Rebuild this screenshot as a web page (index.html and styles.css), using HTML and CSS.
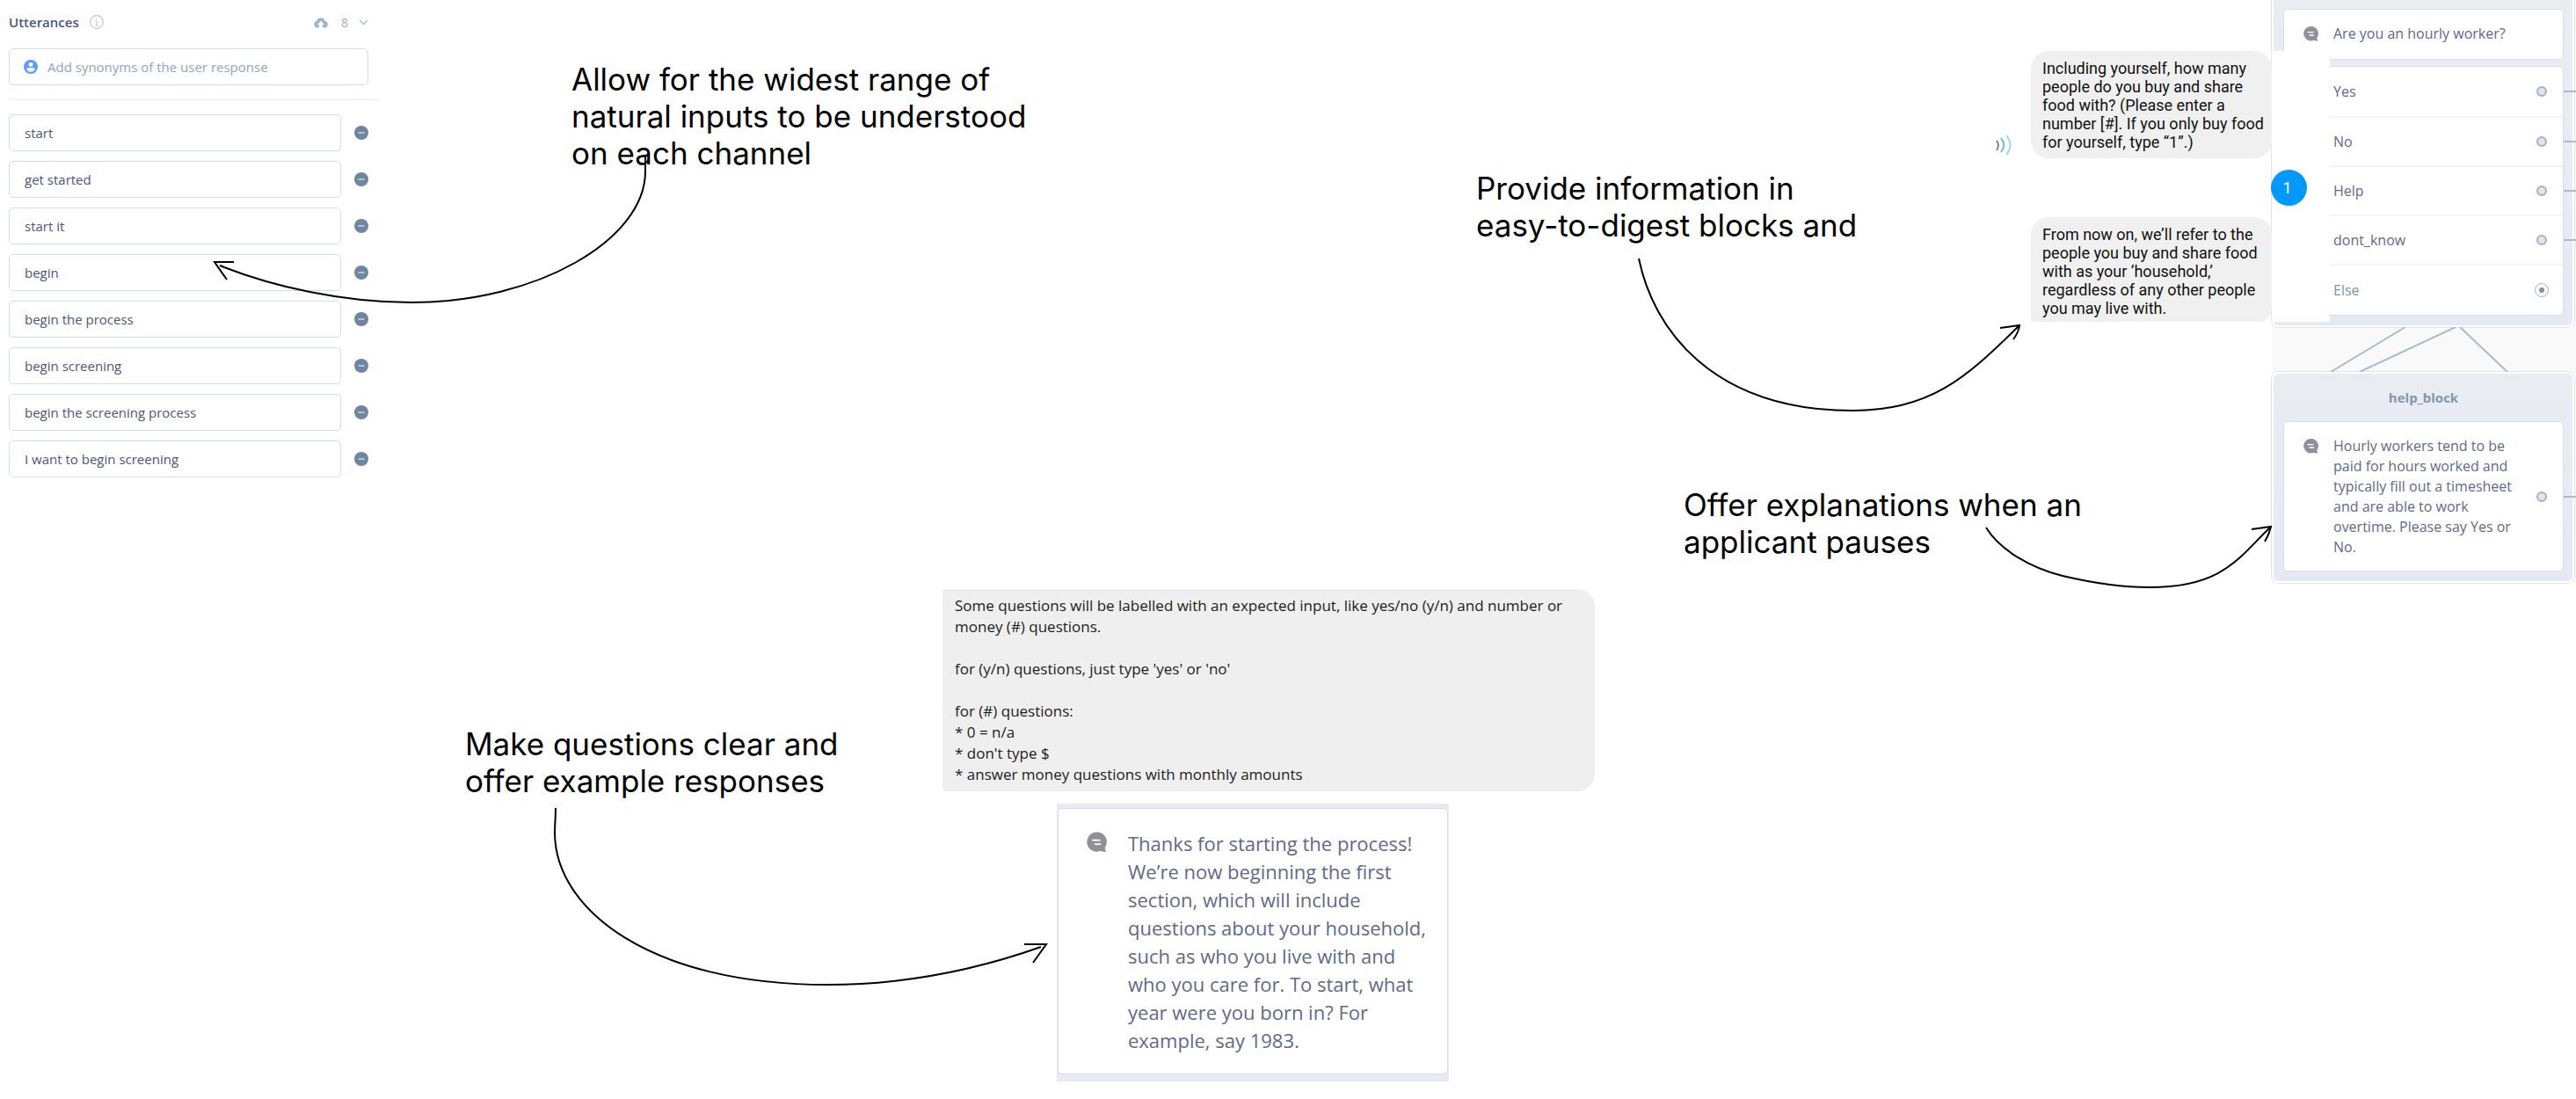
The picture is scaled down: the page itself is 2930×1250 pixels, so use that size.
FILE: index.html
```html
<!DOCTYPE html>
<html lang="en">
<head>
<meta charset="utf-8">
<title>Conversation design notes</title>
<link rel="stylesheet" href="styles.css">
</head>
<body>
<svg class="defs" width="0" height="0" aria-hidden="true">
  <symbol id="minus" viewBox="0 0 16 16"><circle cx="8" cy="8" r="8" fill="#70869e"/><path d="M4.500 8h7" stroke="#dfe6ee" stroke-width="1.300"/></symbol>
  <symbol id="speech" viewBox="0 0 17 17"><path d="M8.300 0a8.200 8.200 0 1 0 3.200 15.800l4.700 1-.9-3.800A8.200 8.200 0 0 0 8.300 0z" fill="#8f9098"/><path d="M4.500 6.700h7M6.500 10h5.500" stroke="#fff" stroke-width="1.300"/></symbol>
</svg>
<main class="board">

  <section class="item utterances" aria-label="Utterances">
    <header class="utterances-head">
      <h2>Utterances</h2>
      <svg class="info" viewBox="0 0 16 16"><circle cx="8" cy="8" r="7.300" fill="none" stroke="#b9cadb" stroke-width="1.200"/><path d="M8 7v5M6.700 7H8M6.500 12h3M8 3.700v1.500" stroke="#b9cadb" stroke-width="1.200" fill="none"/></svg>
      <button class="icon-button push" aria-label="Upload"><svg width="16" height="13" viewBox="0 0 16 13"><path d="M5.800 12.500H4A4 4 0 0 1 3.200 4.700 5 5 0 0 1 12.800 5a3.800 3.800 0 0 1-.4 7.500H10V9h2L8 4.800 4 9h1.800z" fill="#a3b4c6"/></svg></button>
      <span class="count">8</span>
      <button class="icon-button" aria-label="Collapse"><svg width="11" height="7" viewBox="0 0 11 7"><path d="M1 1l4.500 4.500L10 1" fill="none" stroke="#b3c5d8" stroke-width="1.600"/></svg></button>
    </header>
    <label class="field add">
      <svg width="16" height="16" viewBox="0 0 16 16"><circle cx="8" cy="8" r="8" fill="#5b9cf6"/><circle cx="8" cy="5.200" r="2.500" fill="#fff"/><path d="M3.200 10c.5 5 9.100 5 9.600 0-1.500-1.300-8.100-1.300-9.600 0z" fill="#fff"/></svg>
      <input type="text" aria-label="Add synonyms" placeholder="Add synonyms of the user response">
    </label>
    <hr>
    <ul class="phrases">
      <li><input class="field" aria-label="Utterance 1" value="start"><button class="icon-button" aria-label="Remove"><svg width="16" height="16"><use href="#minus"/></svg></button></li>
      <li><input class="field" aria-label="Utterance 2" value="get started"><button class="icon-button" aria-label="Remove"><svg width="16" height="16"><use href="#minus"/></svg></button></li>
      <li><input class="field" aria-label="Utterance 3" value="start it"><button class="icon-button" aria-label="Remove"><svg width="16" height="16"><use href="#minus"/></svg></button></li>
      <li><input class="field" aria-label="Utterance 4" value="begin"><button class="icon-button" aria-label="Remove"><svg width="16" height="16"><use href="#minus"/></svg></button></li>
      <li><input class="field" aria-label="Utterance 5" value="begin the process"><button class="icon-button" aria-label="Remove"><svg width="16" height="16"><use href="#minus"/></svg></button></li>
      <li><input class="field" aria-label="Utterance 6" value="begin screening"><button class="icon-button" aria-label="Remove"><svg width="16" height="16"><use href="#minus"/></svg></button></li>
      <li><input class="field" aria-label="Utterance 7" value="begin the screening process"><button class="icon-button" aria-label="Remove"><svg width="16" height="16"><use href="#minus"/></svg></button></li>
      <li><input class="field" aria-label="Utterance 8" value="I want to begin screening"><button class="icon-button" aria-label="Remove"><svg width="16" height="16"><use href="#minus"/></svg></button></li>
    </ul>
  </section>

  <section class="item flow" aria-label="Flow">
    <div class="block block-top">
      <div class="card message"><svg width="17" height="17"><use href="#speech"/></svg><p>Are you an hourly worker?</p></div>
      <ul class="card choices">
        <li class="wired">Yes<span class="port"></span></li>
        <li class="wired">No<span class="port"></span></li>
        <li class="wired">Help<span class="port"></span></li>
        <li class="wired">dont_know<span class="port"></span></li>
        <li class="else">Else<span class="port target"></span></li>
      </ul>
    </div>
    <svg class="links" width="346" height="51" viewBox="0 0 346 51"><path d="M152 0L67 51M209 0L100 51M214 0l54 51" stroke="#a9bccd" stroke-width="2" fill="none"/></svg>
    <div class="block">
      <h3>help_block</h3>
      <div class="card message wired"><svg width="17" height="17"><use href="#speech"/></svg><p>Hourly workers tend to be<br>paid for hours worked and<br>typically fill out a timesheet<br>and are able to work<br>overtime. Please say Yes or<br>No.</p><span class="port"></span></div>
    </div>
  </section>

  <section class="item chat" aria-label="Chat">
    <div class="turn">
      <svg class="waves" width="20" height="24" viewBox="0 0 20 24" fill="none"><path d="M1 7q4 5 0 11" stroke="#37788b" stroke-width="1.500"/><path d="M6 4q6.500 8 0 16" stroke="#4fb0c6" stroke-width="1.600"/><path d="M12 1q9 11 0 22" stroke="#a0d8e4" stroke-width="2"/></svg>
      <p class="bubble">Including yourself, how many<br>people do you buy and share<br>food with? (Please enter a<br>number [#]. If you only buy food<br>for yourself, type “1”.)</p>
    </div>
    <p class="reply">1</p>
    <div class="turn">
      <p class="bubble tail">From now on, we’ll refer to the<br>people you buy and share food<br>with as your ‘household,’<br>regardless of any other people<br>you may live with.</p>
    </div>
  </section>

  <section class="item hint">
    <p>Some questions will be labelled with an expected input, like yes/no (y/n) and number or<br>money (#) questions.</p>
    <p>for (y/n) questions, just type 'yes' or 'no'</p>
    <p>for (#) questions:<br>* 0 = n/a<br>* don't type $<br>* answer money questions with monthly amounts</p>
  </section>

  <section class="item opener">
    <div class="card message"><svg width="23" height="24"><use href="#speech"/></svg><p>Thanks for starting the process!<br>We’re now beginning the first<br>section, which will include<br>questions about your household,<br>such as who you live with and<br>who you care for. To start, what<br>year were you born in? For<br>example, say 1983.</p></div>
  </section>

  <p class="item note note-inputs">Allow for the widest range of<br>natural inputs to be understood<br>on each channel</p>
  <p class="item note note-blocks">Provide information in<br>easy-to-digest blocks and</p>
  <p class="item note note-explain">Offer explanations when an<br>applicant pauses</p>
  <p class="item note note-examples">Make questions clear and<br>offer example responses</p>

  <svg class="item arrows" aria-hidden="true">
    <path d="M734 178V195C734 273 610 344 468 344C390 344 310 326 250 302M266 298H244L258 318"/>
    <path d="M1864 294C1880 372 1945 467 2108 467C2195 467 2236 430 2296 371M2275 373L2297 370Q2296 378 2290 386"/>
    <path d="M2259 600C2275 626 2310 646 2346 655C2380 663 2412 668 2445 668C2530 668 2548 632 2582 600M2561 602L2583 599Q2581 608 2576 616"/>
    <path d="M632 919C632 930 631 938 631 948C632 1035 740 1120 941 1120C1025 1120 1105 1105 1184 1077M1165 1074H1190L1175 1095"/>
  </svg>
</main>
</body>
</html>
```

FILE: styles.css
```css
*, *::before, *::after { box-sizing: border-box; }
body { margin: 0; background: #fff; font-family: "Open Sans", "Noto Sans", sans-serif; }
h2, h3, p, ul { margin: 0; padding: 0; }
ul { list-style: none; }
.defs { position: absolute; }

/* Free canvas: every top-level item is pinned at its own spot */
.board { position: relative; min-height: 100vh; overflow: hidden; }
.item { position: absolute; }

.icon-button { display: flex; padding: 0; border: 0; background: none; }

/* Utterances panel */
.utterances { left: 10px; top: 15px; width: 422px; color: #4c5778; font-size: 15px; }
.utterances-head { display: flex; align-items: center; height: 20px; padding-right: 13px; }
.utterances-head h2 { font-size: 15px; font-weight: 600; line-height: 20px; }
.info { width: 16px; height: 16px; margin-left: 12px; }
.push { margin-left: auto; }
.count { margin: 0 12px 0 15px; font-size: 14px; color: #9fb0c2; }
.field { display: flex; align-items: center; height: 42px; border: 1px solid #d3dde8; border-radius: 5px; background: #fff; }
.add { gap: 11px; margin: 20px 13px 15px 0; padding: 0 16px; }
.add input { flex: 1; padding: 0; border: 0; outline: 0; font: inherit; color: inherit; }
.add input::placeholder { color: #90a5bb; opacity: 1; }
.utterances hr { height: 2px; margin: 0; border: 0; background: #f0f4f8; }
.phrases { display: flex; flex-direction: column; gap: 11px; padding: 16px 13px 0 0; }
.phrases li { display: flex; align-items: center; gap: 15px; }
.phrases .field { flex: 1; min-width: 0; padding: 0 17px; font: inherit; color: inherit; }

/* Notes and arrows */
.note { font: 35px/42px Inter, sans-serif; color: #000; white-space: nowrap; }
.note-inputs { left: 650px; top: 69px; }
.note-blocks { left: 1679px; top: 193px; }
.note-explain { left: 1915px; top: 553px; }
.note-examples { left: 529px; top: 825px; }
.arrows { inset: 0; width: 100%; height: 100%; fill: none; stroke: #000; stroke-width: 2; pointer-events: none; }

/* Shared cards */
.card { border: 1px solid #d6dce8; border-radius: 5px; background: #fff; }
.message { display: flex; align-items: flex-start; }
.message svg { flex: none; }

/* Flow blocks */
.flow { left: 2584px; top: 0; width: 346px; background: #f9f9f9; color: #5f6a88; font-size: 16px; line-height: 23px; white-space: nowrap; }
.block { margin-right: 2px; padding: 0 10px 11px 11px; border: 2px solid #fff; border-radius: 8px; background: linear-gradient(#e9edf2, #e6e9f3); box-shadow: 0 0 0 1px #dfe3ea; }
.block-top { display: flex; flex-direction: column; gap: 7px; padding-top: 10px; border-top: 0; border-radius: 0 0 8px 8px; }
.block h3 { padding: 16px 0; font-size: 15px; font-weight: 700; line-height: 22px; text-align: center; color: #8297aa; }
.flow .message { position: relative; gap: 17px; padding: 16px 16px 15px 22px; }
.flow .block-top .message { padding-bottom: 17px; }
.flow .message svg { margin-top: 3px; }
.flow .message .port { margin-left: auto; align-self: center; }
.choices li { position: relative; display: flex; align-items: center; justify-content: space-between; height: 56px; padding: 0 16px 0 56px; }
.choices li + li { border-top: 2px solid #f1f5f8; }
.choices .else { height: 58px; color: #8193a8; }
.port { display: grid; place-items: center; width: 16px; height: 16px; }
.port::before { content: ""; width: 12px; height: 12px; border: 2px solid #a3b2c1; border-radius: 50%; background: #e2e5e8; }
.target { border: 1px solid #9fb3c7; border-radius: 50%; }
.target::before { width: 6px; height: 6px; border: 0; background: #7d93aa; }
.wired::after { content: ""; position: absolute; right: -15px; top: calc(50% - 1px); width: 14px; height: 2px; background: #a9bacb; }
.links { display: block; }

/* Chat capture */
.chat { left: 2260px; top: 58px; width: 390px; height: 308px; overflow: hidden; display: flex; flex-direction: column; gap: 13px; background: linear-gradient(#fff, #fff) right / 66px 100% no-repeat; font: 18px/21px Roboto, sans-serif; color: #111; white-space: nowrap; }
.turn { display: flex; align-items: flex-end; justify-content: flex-end; gap: 20px; padding-right: 66px; }
.waves { margin-bottom: 3px; }
.bubble { flex: none; width: 274px; padding: 9px 0 8px 13px; border-radius: 20px; background: #f0f0f0; }
.tail { border-bottom-left-radius: 4px; }
.reply { align-self: flex-end; width: 41px; margin-right: 26px; padding-right: 4px; border-radius: 50%; background: #0199ff; color: #fff; line-height: 41px; text-align: center; }

/* Hint bubble */
.hint { left: 1072px; top: 670px; width: 742px; display: flex; flex-direction: column; gap: 24px; padding: 7px 14px; border-radius: 4px 20px 20px 4px; background: #efefef; font-size: 17px; line-height: 24px; color: #1c1c1c; white-space: nowrap; }

/* Opening question */
.opener { left: 1202px; top: 914px; width: 446px; padding: 5px 1px 8px; background: #e8ecf2; color: #5f6a88; font-size: 22px; line-height: 32px; white-space: nowrap; }
.opener .message { gap: 24px; padding: 23px 0 22px 32px; }
.opener .message svg { margin-top: 3px; }
```
